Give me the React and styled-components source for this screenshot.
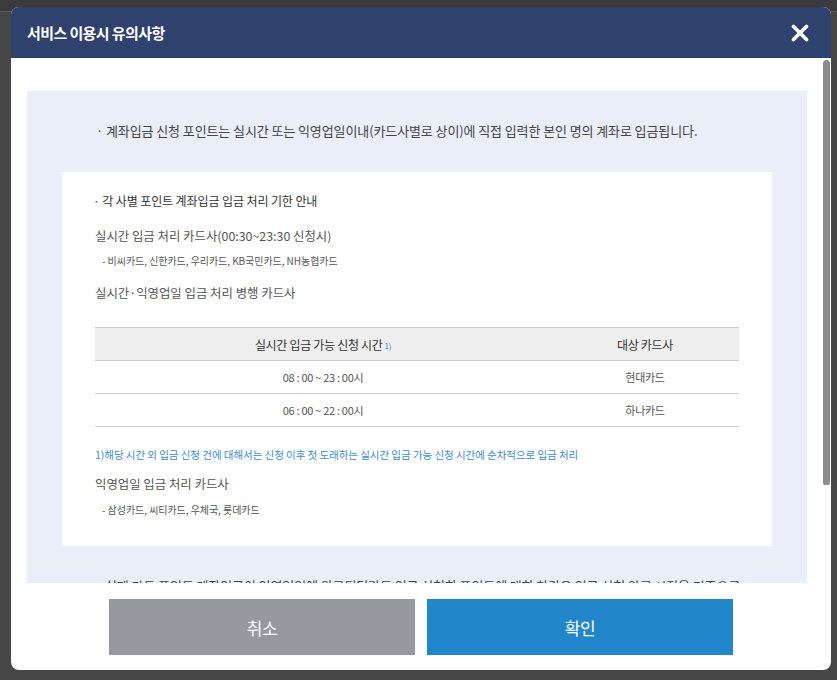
import React from "react";
import styled, { createGlobalStyle } from "styled-components";

const Global = createGlobalStyle`
  html, body { margin: 0; padding: 0; }
  body {
    background: linear-gradient(#3b3b3b 0 11px, #5a5a5a 11px 12px, #474747 12px);
    min-height: 680px;
    font-family: "Noto Sans CJK KR", "Noto Sans", sans-serif;
  }
  * { box-sizing: border-box; }
`;

const Page = styled.div`
  padding: 7px 0 0 11px;
`;

const Modal = styled.div`
  position: relative;
  width: 820px;
  height: 663px;
  background: #fff;
  border-radius: 8px;
  overflow: hidden;
  display: flex;
  flex-direction: column;
`;

const Header = styled.div`
  height: 51px;
  flex: none;
  background: #2f416d;
  display: flex;
  align-items: center;
  justify-content: space-between;
  padding: 0 22px 0 16px;
`;

const Title = styled.h1`
  margin: 0;
  font-size: 15px;
  font-weight: 700;
  color: #fff;
  letter-spacing: -0.6px;
`;

const CloseButton = styled.button`
  border: 0;
  background: none;
  padding: 0;
  width: 18px;
  height: 18px;
  display: flex;
  cursor: pointer;
`;

const Scroller = styled.div`
  height: 525px;
  flex: none;
  overflow-y: auto;
  scrollbar-width: none;
  padding: 33px 24px 60px 16px;
  &::-webkit-scrollbar { display: none; }
`;

const ScrollThumb = styled.div`
  position: absolute;
  top: 53px;
  right: 1px;
  width: 7px;
  height: 425px;
  border-radius: 4px 4px 3px 3px;
  background: #8b8b8b;
`;

const InfoBox = styled.div`
  background: #eaeef8;
  padding: 31px 35px 31px 35px;
`;

const Lead = styled.p`
  margin: ${(p) => p.$mt || 0}px 0 0 0;
  padding: ${(p) => (p.$tail ? "0 30px 0 43px" : "0 20px 0 34px")};
  font-size: 13px;
  line-height: ${(p) => p.$lh || 18}px;
  color: #444;
  letter-spacing: -0.1px;
`;

const WhiteCard = styled.div`
  background: #fff;
  margin-top: 32px;
  padding: 20px 33px 27px 33px;
`;

const Heading = styled.p`
  margin: 0 0 0 -2px;
  font-size: 12px;
  line-height: 18px;
  color: #333;
  letter-spacing: -0.1px;
`;

const Label = styled.p`
  margin: ${(p) => p.$mt}px 0 0 0;
  font-size: 12.4px;
  line-height: 18px;
  color: #555;
  letter-spacing: 0;
`;

const Sub = styled.p`
  margin: ${(p) => p.$mt}px 0 0 7px;
  font-size: 10px;
  line-height: 18px;
  color: #555;
  letter-spacing: -0.05px;
`;

const Note = styled.p`
  margin: 19px 0 0 0;
  font-size: 10.5px;
  line-height: 18px;
  color: #3a8ccd;
  letter-spacing: -0.05px;
`;

const Table = styled.table`
  margin-top: 25px;
  width: 100%;
  border-collapse: collapse;
  border-top: 1px solid #ccc;
`;

const Th = styled.th`
  height: 33px;
  background: #eee;
  font-size: 12px;
  font-weight: 400;
  color: #333;
  letter-spacing: -0.3px;
  border-bottom: 1px solid #ccc;
  width: ${(p) => p.$w || "auto"};
  padding: 0;
`;

const Td = styled.td`
  height: 33px;
  text-align: center;
  font-size: 11px;
  color: #555;
  letter-spacing: -0.3px;
  border-bottom: 1px solid #ccc;
  padding: 0;
`;

const Sup = styled.span`
  font-size: 8px;
  color: #3a8ccd;
  margin-left: 2px;
  vertical-align: 1px;
`;

const Footer = styled.div`
  flex: 1;
  display: flex;
  justify-content: center;
  gap: 12px;
  padding-top: 16px;
`;

const ActionButton = styled.button`
  width: 306px;
  height: 56px;
  border: 0;
  background: ${(p) => (p.$primary ? "#2287ca" : "#95999d")};
  color: #fff;
  font-family: "Noto Sans CJK KR", sans-serif;
  font-size: 17px;
  letter-spacing: -0.5px;
  cursor: pointer;
`;

export default function App() {
  return (
    <>
      <Global />
      <Page>
        <Modal>
          <Header>
            <Title>서비스 이용시 유의사항</Title>
            <CloseButton aria-label="닫기">
              <svg width="18" height="18" viewBox="0 0 18 18">
                <path d="M2.5 2.5 L15.5 15.5 M15.5 2.5 L2.5 15.5" stroke="#fff" strokeWidth="3.6" strokeLinecap="round" />
              </svg>
            </CloseButton>
          </Header>
          <Scroller>
            <InfoBox>
              <Lead>· 계좌입금 신청 포인트는 실시간 또는 익영업일이내(카드사별로 상이)에 직접 입력한 본인 명의 계좌로 입금됩니다.</Lead>
              <WhiteCard>
                <Heading>· 각 사별 포인트 계좌입금 입금 처리 기한 안내</Heading>
                <Label $mt={17}>실시간 입금 처리 카드사(00:30~23:30 신청시)</Label>
                <Sub $mt={7}>- 비씨카드, 신한카드, 우리카드, KB국민카드, NH농협카드</Sub>
                <Label $mt={14}>실시간·익영업일 입금 처리 병행 카드사</Label>
                <Table>
                  <thead>
                    <tr>
                      <Th $w="456px">실시간 입금 가능 신청 시간<Sup>1)</Sup></Th>
                      <Th>대상 카드사</Th>
                    </tr>
                  </thead>
                  <tbody>
                    <tr>
                      <Td>08 : 00 ~ 23 : 00시</Td>
                      <Td>현대카드</Td>
                    </tr>
                    <tr>
                      <Td>06 : 00 ~ 22 : 00시</Td>
                      <Td>하나카드</Td>
                    </tr>
                  </tbody>
                </Table>
                <Note>1)해당 시간 외 입금 신청 건에 대해서는 신청 이후 첫 도래하는 실시간 입금 가능 신청 시간에 순차적으로 입금 처리</Note>
                <Label $mt={11}>익영업일 입금 처리 카드사</Label>
                <Sub $mt={8}>- 삼성카드, 씨티카드, 우체국, 롯데카드</Sub>
              </WhiteCard>
              <Lead $mt={30} $lh={20} $tail>
                실제 카드 포인트 계좌입금이 익영업일에 완료되더라도 입금 신청한 포인트에 대한 차감은 입금 신청 완료 시점을 기준으로 처리되며, 입금 신청 완료 후에는 취소가 불가능합니다.
              </Lead>
            </InfoBox>
          </Scroller>
          <ScrollThumb />
          <Footer>
            <ActionButton>취소</ActionButton>
            <ActionButton $primary>확인</ActionButton>
          </Footer>
        </Modal>
      </Page>
    </>
  );
}
